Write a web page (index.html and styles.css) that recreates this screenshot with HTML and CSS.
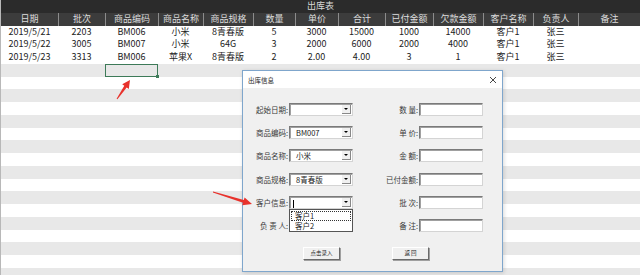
FILE: index.html
```html
<!DOCTYPE html>
<html>
	<head>
		<meta charset="utf-8">
		<title>出库表</title>
		<link rel="stylesheet" href="styles.css">
	</head>
	<body>
		<div class="sheet">
			<div class="tieude">出库表</div>
			<div class="hang dau">
				<div>日期</div><div>批次</div><div>商品编码</div><div>商品名称</div><div>商品规格</div><div>数量</div><div>单价</div><div>合计</div><div>已付金额</div><div>欠款金额</div><div>客户名称</div><div>负责人</div><div>备注</div>
			</div>
			<div class="hang">
				<div>2019/5/21</div><div>2203</div><div>BM006</div><div>小米</div><div>8青春版</div><div>5</div><div>3000</div><div>15000</div><div>1000</div><div>14000</div><div>客户1</div><div>张三</div><div></div>
			</div>
			<div class="hang">
				<div>2019/5/22</div><div>3005</div><div>BM007</div><div>小米</div><div>64G</div><div>3</div><div>2000</div><div>6000</div><div>2000</div><div>4000</div><div>客户1</div><div>张三</div><div></div>
			</div>
			<div class="hang">
				<div>2019/5/23</div><div>3313</div><div>BM006</div><div>苹果X</div><div>8青春版</div><div>2</div><div>2.00</div><div>4.00</div><div>3</div><div>1</div><div>客户1</div><div>张三</div><div></div>
			</div>
			<div class="hang xam">
				<div></div><div></div><div class="chon"></div><div></div><div></div><div></div><div></div><div></div><div></div><div></div><div></div><div></div><div></div>
			</div>
			<div class="hang"></div>
			<div class="hang xam"></div>
			<div class="hang"></div>
			<div class="hang xam"></div>
			<div class="hang"></div>
			<div class="hang xam"></div>
			<div class="hang"></div>
			<div class="hang xam"></div>
			<div class="hang"></div>
			<div class="hang xam"></div>
			<div class="hang"></div>
			<div class="hang xam"></div>
			<div class="hang"></div>
			<div class="hang xam"></div>
			<div class="hang"></div>
			<div class="hang xam"></div>
		</div>

		<div class="hop">
			<div class="thanh">
				<span>出库信息</span>
				<svg class="dong" width="8" height="8" viewBox="0 0 8 8">
					<path d="M1 1 L7 7 M7 1 L1 7" stroke="#333" stroke-width="0.9"/>
				</svg>
			</div>
			<div class="than">
				<div class="luoi">
					<label>起始日期:</label>
					<div class="chonhop"><span></span><i></i></div>
					<label>数 量:</label>
					<div class="o"></div>

					<label>商品编码:</label>
					<div class="chonhop"><span>BM007</span><i></i></div>
					<label>单 价:</label>
					<div class="o"></div>

					<label>商品名称:</label>
					<div class="chonhop"><span>小米</span><i></i></div>
					<label>金 额:</label>
					<div class="o"></div>

					<label>商品规格:</label>
					<div class="chonhop"><span>8青春版</span><i></i></div>
					<label>已付金额:</label>
					<div class="o"></div>

					<label>客户信息:</label>
					<div class="chonhop mo"><span><b class="con-tro"></b></span><i></i>
						<div class="danhsach">
							<div class="muc dangchon">客户1</div>
							<div class="muc">客户2</div>
						</div>
					</div>
					<label>批 次:</label>
					<div class="o"></div>

					<label>负 责 人:</label>
					<div class="chonhop"><span></span><i></i></div>
					<label>备 注:</label>
					<div class="o"></div>
				</div>
				<div class="nut">
					<button>点击录入</button>
					<button>返 回</button>
				</div>
			</div>
		</div>

		<svg class="muiten" width="640" height="275" viewBox="0 0 640 275">
			<polygon points="117.4,99.3 126.7,87.4 128.8,88.9 130,80 122.2,84.3 124.3,85.8 116.6,98.7" fill="#e8322c"/>
			<polygon points="213.1,191.6 243.8,200 244.6,197.6 252,204 242.2,205.2 243,202.8 212.9,192.4" fill="#e8322c"/>
		</svg>
	</body>
</html>
```

FILE: styles.css
```css
*{
	box-sizing: border-box;
}
body{
	margin: 0;
	width: 640px;
	height: 275px;
	overflow: hidden;
	background: #fff;
	font-family: "Noto Sans CJK SC", "Noto Sans", sans-serif;
	color: #222;
}
.sheet{
	width: 640px;
	border-left: 1px solid #b8b8b8;
}
.tieude{
	height: 12.75px;
	line-height: 12.75px;
	background: #2b2b2b;
	color: #d8d8d8;
	font-size: 9px;
	text-align: center;
}
.hang{
	display: grid;
	grid-template-columns: 57px 47px 53px 45px 50px 42px 43px 47px 48px 50px 50px 45px 62px;
	height: 12.75px;
	line-height: 12.75px;
	font-size: 9px;
	text-align: center;
	background: #fff;
}
.hang.xam{
	background: #e8e8e8;
}
.hang.dau{
	background: #3c3c3c;
	color: #dcdcdc;
}
.hang.dau > div{
	border-left: 1px solid #8c8c8c;
}
.hang.dau > div:first-child{
	border-left: none;
}
.chon{
	position: relative;
	outline: 1.5px solid #3d7a58;
	outline-offset: -1.5px;
}
.chon::after{
	content: "";
	position: absolute;
	right: -1px;
	bottom: -1px;
	width: 3px;
	height: 3px;
	background: #3d7a58;
}

/* hop thoai */
.hop{
	position: absolute;
	left: 242px;
	top: 70px;
	width: 261px;
	height: 202px;
	border: 1px solid #7fa6cc;
	background: #f0f0f0;
	box-shadow: 1px 1px 4px rgba(0,0,0,0.15);
	font-size: 7.5px;
	color: #3a3a3a;
}
.thanh{
	height: 17px;
	background: #fff;
	display: flex;
	align-items: center;
	justify-content: space-between;
	padding: 0 5px 0 5px;
	font-size: 6.5px;
	color: #222;
}
.than{
	padding-top: 15px;
}
.luoi{
	display: grid;
	grid-template-columns: 46px 64px 66px 64px;
	grid-auto-rows: 13px;
	row-gap: 10.2px;
}
.luoi label{
	text-align: right;
	line-height: 13px;
	padding-right: 1px;
	white-space: nowrap;
}
.o, .chonhop{
	background: #fff;
	border-top: 1px solid #7a7a7a;
	border-left: 1px solid #7a7a7a;
	border-right: 1px solid #d4d4d4;
	border-bottom: 1px solid #d4d4d4;
	box-shadow: inset 1px 1px 0 #a0a0a0;
}
.chonhop{
	position: relative;
	display: flex;
	align-items: center;
}
.chonhop span{
	flex: 1;
	padding-left: 6px;
	font-size: 7.5px;
	color: #222;
	line-height: 11px;
}
.chonhop i{
	width: 9px;
	height: 9px;
	margin-right: 1px;
	background: #f0f0f0;
	border-right: 1px solid #888;
	border-bottom: 1px solid #888;
	position: relative;
}
.chonhop i::before{
	content: "";
	position: absolute;
	left: 2px;
	top: 3px;
	border-left: 2px solid transparent;
	border-right: 2px solid transparent;
	border-top: 2px solid #000;
}
.con-tro{
	display: inline-block;
	width: 1px;
	height: 8px;
	background: #000;
	vertical-align: middle;
	margin-left: -3px;
}
.danhsach{
	position: absolute;
	left: -1px;
	right: -1px;
	top: 12px;
	height: 23px;
	background: #fff;
	border: 1px solid #555;
	z-index: 2;
	padding: 1px;
}
.muc{
	height: 10px;
	line-height: 10px;
	padding-left: 4px;
	font-size: 7.5px;
	color: #222;
}
.dangchon{
	outline: 1px dotted #333;
	outline-offset: -1px;
}
.nut{
	display: flex;
	gap: 52px;
	padding-left: 60px;
	margin-top: 15px;
}
.nut button{
	width: 37px;
	height: 13px;
	padding: 0;
	font-family: inherit;
	font-size: 5.5px;
	color: #222;
	background: #f0f0f0;
	border-top: 1px solid #fff;
	border-left: 1px solid #fff;
	border-right: 1px solid #6a6a6a;
	border-bottom: 1px solid #6a6a6a;
	box-shadow: 1px 1px 0 #a0a0a0;
}
.muiten{
	position: absolute;
	left: 0;
	top: 0;
	pointer-events: none;
	z-index: 5;
}
```
